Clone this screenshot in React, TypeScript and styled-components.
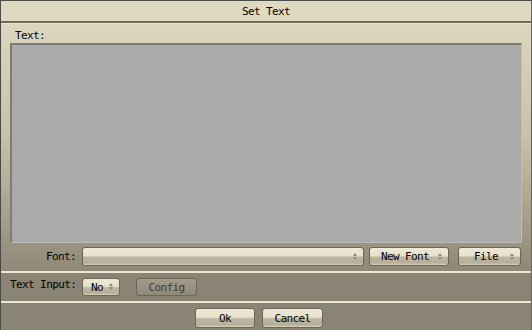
import styled, { createGlobalStyle } from "styled-components";

const Global = createGlobalStyle`
  html, body { margin: 0; padding: 0; background: #8a8474; }
  body {
    font-family: "DejaVu Sans Mono", "Liberation Mono", monospace;
    font-size: 11px;
    letter-spacing: -0.6px;
    color: #000;
  }
`;

const Window = styled.div`
  width: 532px;
  height: 330px;
  box-sizing: border-box;
  border-left: 1px solid #4a4a46;
  border-top: 1px solid #4a4a46;
  border-right: 1px solid #6a6558;
  display: flex;
  flex-direction: column;
  overflow: hidden;
`;

const TitleBar = styled.div`
  height: 19px;
  flex: none;
  background: #dfd9c2;
  border-bottom: 2px solid #6d685a;
  display: flex;
  align-items: center;
  justify-content: center;
  padding-top: 1px;
`;

const Body = styled.div`
  flex: none;
  height: 248px;
  box-sizing: border-box;
  padding: 5px 9px 0 9px;
  border-top: 1px solid #ece6d1;
  background: linear-gradient(#dcd6be 0%, #c9c2aa 45%, #8f8877 100%);
  display: flex;
  flex-direction: column;
`;

const Label = styled.div`
  padding-left: 5px;
  height: 14px;
  line-height: 14px;
`;

const TextArea = styled.div`
  height: 200px;
  flex: none;
  box-sizing: border-box;
  background: #aaaaaa;
  border-top: 2px solid #7c7c7b;
  border-left: 2px solid #7c7c7b;
  border-right: 1px solid #bdbdbb;
  border-bottom: 1px solid #bdbdbb;
`;

const Row = styled.div<{ $gap?: number }>`
  display: flex;
  align-items: center;
  gap: ${(p) => p.$gap ?? 0}px;
`;

const FontRow = styled(Row)`
  margin-top: 4px;
  height: 19px;
`;

const RowLabel = styled.div<{ $w: number; $left?: boolean }>`
  width: ${(p) => p.$w}px;
  text-align: ${(p) => (p.$left ? "left" : "right")};
  padding: ${(p) => (p.$left ? "0 0 0 9px" : "0 6px 0 0")};
  margin-bottom: ${(p) => (p.$left ? 6 : 0)}px;
  white-space: nowrap;
  flex: none;
  box-sizing: border-box;
`;

const Control = styled.div<{ $w: number; $h?: number; $dim?: boolean }>`
  width: ${(p) => p.$w}px;
  height: ${(p) => p.$h ?? 19}px;
  flex: none;
  box-sizing: border-box;
  border: 1px solid #6c6658;
  border-radius: 3px;
  background: ${(p) =>
    p.$dim
      ? "linear-gradient(#a29b8a 0%, #9a9382 50%, #8f8877 100%)"
      : "linear-gradient(#eee9d7 0%, #e6e0cc 45%, #bdb59f 55%, #b6ae98 88%, #d8d2bd 100%)"};
  color: ${(p) => (p.$dim ? "#3e3b34" : "#000")};
  display: flex;
  align-items: center;
  justify-content: center;
  position: relative;
`;

const Spin = styled.span`
  position: absolute;
  right: 6px;
  top: 5px;
  display: flex;
  flex-direction: column;
  gap: 1px;
  &::before, &::after {
    content: "";
    width: 0;
    height: 0;
    border-left: 2.5px solid transparent;
    border-right: 2.5px solid transparent;
  }
  &::before { border-bottom: 3px solid #8f8a80; }
  &::after { border-top: 3px solid #8f8a80; }
`;

const ChoiceText = styled.span<{ $shift?: number }>`
  margin-right: ${(p) => p.$shift ?? 0}px;
`;

const Separator = styled.div`
  height: 2px;
  flex: none;
  background: #eee8d3;
`;

const Bar = styled.div<{ $h: number; $center?: boolean }>`
  height: ${(p) => p.$h}px;
  flex: none;
  background: #8a8474;
  box-sizing: border-box;
  display: flex;
  align-items: center;
  justify-content: ${(p) => (p.$center ? "center" : "flex-start")};
  padding-top: ${(p) => (p.$center ? 1 : 0)}px;
`;

export default function App() {
  return (
    <>
      <Global />
      <Window>
        <TitleBar>Set Text</TitleBar>
        <Body>
          <Label>Text:</Label>
          <TextArea />
          <FontRow>
            <RowLabel $w={72}>Font:</RowLabel>
            <Control $w={282}>
              <Spin />
            </Control>
            <Control $w={80} style={{ marginLeft: 5 }}>
              <ChoiceText $shift={8}>New Font</ChoiceText>
              <Spin />
            </Control>
            <Control $w={63} style={{ marginLeft: 9 }}>
              <ChoiceText $shift={7}>File</ChoiceText>
              <Spin />
            </Control>
          </FontRow>
        </Body>
        <Separator />
        <Bar $h={28}>
          <Row>
            <RowLabel $w={81} $left>
              Text Input:
            </RowLabel>
            <Control $w={38} $h={18}>
              <ChoiceText $shift={8}>No</ChoiceText>
              <Spin style={{ top: 4 }} />
            </Control>
            <Control $w={61} $h={18} $dim style={{ marginLeft: 16 }}>
              Config
            </Control>
          </Row>
        </Bar>
        <Separator />
        <Bar $h={29} $center>
          <Row $gap={7} style={{ marginLeft: -14 }}>
            <Control $w={60} $h={20}>Ok</Control>
            <Control $w={61} $h={20}>Cancel</Control>
          </Row>
        </Bar>
      </Window>
    </>
  );
}
